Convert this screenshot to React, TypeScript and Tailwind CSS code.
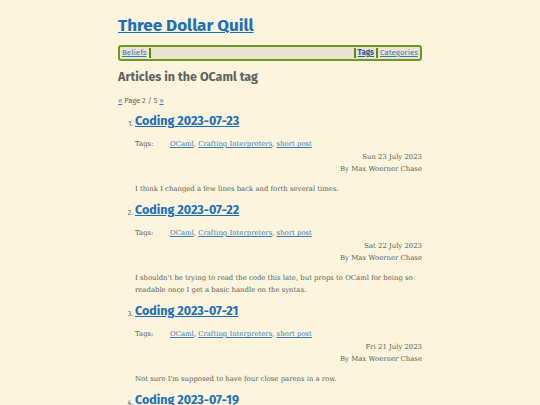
import React from "react";

const posts = [
  { n: 1, title: "Coding 2023-07-23", date: "Sun 23 July 2023", body: "I think I changed a few lines back and forth several times." },
  { n: 2, title: "Coding 2023-07-22", date: "Sat 22 July 2023", body: "I shouldn't be trying to read the code this late, but props to OCaml for being so readable once I get a basic handle on the syntax." },
  { n: 3, title: "Coding 2023-07-21", date: "Fri 21 July 2023", body: "Not sure I'm supposed to have four close parens in a row." },
  { n: 4, title: "Coding 2023-07-19", date: "Wed 19 July 2023", body: "More work." },
];

const head = { fontFamily: '"Fira Sans", "Noto Sans", "Open Sans", sans-serif' };
const serif = { fontFamily: '"Roboto Slab", "DejaVu Serif", "Liberation Serif", serif' };

export default function App() {
  return (
    <div className="h-[405px] w-[540px] overflow-hidden bg-[#fcf4dc] text-[#595d59]">
      <div className="mx-auto w-[304px] pt-[14px]">
        <h1 className="text-[17px] font-bold leading-[24px] text-[#1a6fc0] underline" style={head}>
          Three Dollar Quill
        </h1>
        <nav className="mt-[7px] flex h-[16px] items-center rounded-[3px] border-2 border-[#6b9a1e] bg-[#ebe4d1] px-[1px] text-[8px] leading-[10px]" style={head}>
          <a className="pr-[2px] pl-[1px] text-[#3a7ab8] underline">Beliefs</a>
          <span className="h-[10px] w-[2px] bg-[#5c8a1a]" />
          <span className="flex-1" />
          <span className="h-[10px] w-[2px] bg-[#5c8a1a]" />
          <a className="px-[2px] font-bold text-[#2a5e96] underline">Tags</a>
          <span className="h-[10px] w-[2px] bg-[#5c8a1a]" />
          <a className="pl-[2px] pr-[1px] text-[#3a7ab8] underline">Categories</a>
        </nav>
        <h2 className="mt-[7px] text-[12.5px] font-bold leading-[18px] text-[#5b6363]" style={head}>
          Articles in the OCaml tag
        </h2>
        <div className="mt-[10px] text-[7.5px] leading-[10px] text-[#666]" style={head}>
          <a className="text-[#3a7ab8] underline">«</a> Page 2 / 5 <a className="text-[#3a7ab8] underline">»</a>
        </div>
        <ol className="mt-[6px]">
          {posts.map((p) => (
            <li key={p.n} className="flex">
              <span className="w-[17px] pr-[2px] pt-[7px] text-right text-[7px] leading-[10px]" style={head}>{p.n}.</span>
              <div className="flex-1">
                <h3 className="text-[12.5px] font-bold leading-[18px] text-[#1a6fc0] underline" style={head}>
                  {p.title}
                </h3>
                <div className="mt-[9px] flex text-[6.9px] leading-[10px]" style={serif}>
                  <span className="w-[35px]">Tags:</span>
                  <span>
                    <a className="text-[#3a7ab8] underline">OCaml</a>,{" "}
                    <a className="text-[#3a7ab8] underline">Crafting Interpreters</a>,{" "}
                    <a className="text-[#3a7ab8] underline">short post</a>
                  </span>
                </div>
                <div className="mt-[2px] text-right text-[6.9px] leading-[12px]" style={serif}>
                  <div>{p.date}</div>
                  <div>By Max Woerner Chase</div>
                </div>
                <p className="mt-[8px] mb-[6px] text-[6.9px] leading-[12px]" style={serif}>
                  {p.body}
                </p>
              </div>
            </li>
          ))}
        </ol>
      </div>
    </div>
  );
}
